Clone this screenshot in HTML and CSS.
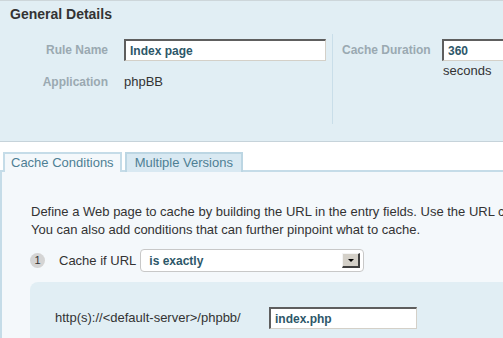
FILE: index.html
```html
<!DOCTYPE html>
<html><head><title>Cache Rule</title>
<link rel="stylesheet" href="styles.css">
</head>
<body>
<div class="general">
  <h2>General Details</h2>
  <div class="fields">
    <div class="col col-main">
      <div class="row"><span class="lbl lbl-main">Rule Name</span><input class="txt txt-name" value="Index page"></div>
      <div class="row row-text"><span class="lbl lbl-main">Application</span><span class="val">phpBB</span></div>
    </div>
    <div class="col col-side">
      <div class="row"><span class="lbl lbl-side">Cache Duration</span>
        <div class="stack"><input class="txt txt-dur" value="360"><span class="val">seconds</span></div>
      </div>
    </div>
  </div>
</div>

<div class="tabs">
  <div class="tab active">Cache Conditions</div>
  <div class="tab">Multiple Versions</div>
</div>

<div class="panel">
  <p class="intro">Define a Web page to cache by building the URL in the entry fields. Use the URL c<br>
  You can also add conditions that can further pinpoint what to cache.</p>
  <div class="step">
    <span class="num">1</span>
    <span class="step-lbl">Cache if URL</span>
    <div class="select"><span class="sel-val">is exactly</span><span class="sel-btn"></span></div>
  </div>
  <div class="urlbox">
    <span class="url-prefix">http(s)://&lt;default-server&gt;/phpbb/</span>
    <input class="txt txt-url" value="index.php">
  </div>
</div>
</body>
</html>
```
FILE: styles.css
```css
body {
	margin: 0; background: white; color: #333;
	font-family: "Liberation Sans", Arial, sans-serif; font-size: 13px;
	overflow: hidden;
}

.general {
	background: #e1eef4;
	border-top: 1px solid #cdd6da; border-bottom: 1px solid #c6d3da;
	height: 140px;
}
.general h2 {
	margin: 0; padding: 5px 10px 0;
	font-size: 14px; line-height: 17px; color: #333;
}
.fields { display: flex; margin-top: 11px; }
.col { height: 90px; flex-shrink: 0; }
.col-main { width: 332px; border-right: 1px solid #c9dee9; }
.col-side { padding-left: 9px; }
.row { display: flex; align-items: flex-start; margin-top: 5px; }
.row-text { margin-top: 10px; line-height: 22px; }
.lbl {
	font-size: 12px; font-weight: bold; color: #9aa9b1;
	line-height: 22px;
}
.lbl-main { width: 108px; text-align: right; margin-right: 16px; }
.lbl-side { width: 100px; }
.val { color: #333; }
.stack { display: flex; flex-direction: column; line-height: 22px; }
.stack .val { padding-left: 1px; line-height: 20px; }

.txt {
	box-sizing: border-box; height: 22px; margin: 0;
	padding: 0 0 0 4px; background: white;
	border-style: solid; border-width: 2px 1px 1px 2px;
	border-color: #5e5e5e #d4d0c8 #d4d0c8 #5e5e5e;
	font-family: "Liberation Sans", Arial, sans-serif;
	font-size: 12px; font-weight: bold; color: #2d5769;
}
.txt-name { width: 202px; }
.txt-dur { width: 100px; }
.txt-url { width: 148px; }

.tabs {
	display: flex; gap: 3px;
	padding: 10px 0 0 3px;
	border-bottom: 2px solid #c5dce8;
}
.tab {
	border: 2px solid #bcd6e3; border-bottom: none;
	background: #d9e9f2; color: #4e7f94;
	line-height: 17px; padding: 0 8px 0 8px;
	margin-bottom: -2px; padding-bottom: 1px;
}
.tab.active {
	background: #f4f8fb; border-color: #c5dce8;
	padding: 0 6px 1px 6px;
}

.panel {
	background: #f4f8fb; border-left: 2px solid #c5dce8;
	padding: 31px 0 40px 28px;
	height: 200px;
}
.intro { margin: 0 0 0 1px; line-height: 18px; white-space: nowrap; }

.step { display: flex; align-items: center; margin-top: 10px; height: 23px; }
.num {
	width: 15px; height: 15px; border-radius: 50%;
	background: #d4d4d4; color: #333;
	font-size: 11px; line-height: 15px; text-align: center;
	margin-right: 14px;
}
.step-lbl { margin-right: 4px; }
.select {
	box-sizing: border-box; width: 224px; height: 23px;
	border: 1px solid #c8c8c8; border-radius: 4px; background: white;
	display: flex; align-items: center; justify-content: space-between;
	padding: 0 3px 0 8px;
}
.sel-val { font-size: 12px; font-weight: bold; color: #2d5769; }
.sel-btn {
	position: relative; box-sizing: border-box;
	width: 18px; height: 15px; background: #d4d0c8;
	border-style: solid; border-width: 1px 2px 2px 1px;
	border-color: #f4f4f4 #404040 #404040 #f4f4f4;
}
.sel-btn::after {
	content: ""; position: absolute; left: 5px; top: 5px;
	border-left: 3px solid transparent; border-right: 3px solid transparent;
	border-top: 3px solid black;
}

.urlbox {
	margin: 10px 0 0 0;
	background: #e1eef4; border-top-left-radius: 8px;
	padding: 25px 0 0 25px; height: 60px;
	display: flex; align-items: flex-start;
}
.url-prefix { line-height: 22px; width: 214px; }
```
